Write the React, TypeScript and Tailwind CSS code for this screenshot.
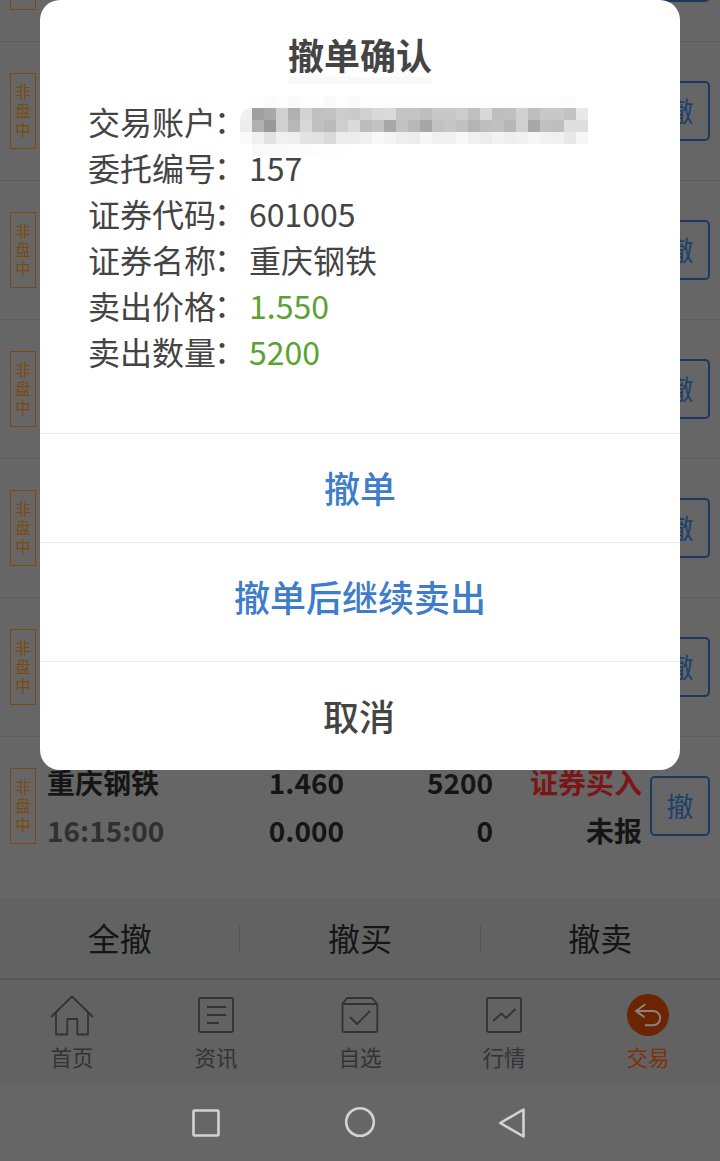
import { useState } from "react";

type Order = {
  tag?: string;
  name?: string;
  time?: string;
  price?: string;
  dealPrice?: string;
  amount?: string;
  dealAmount?: string;
  side?: string;
  status?: string;
};

const orders: Order[] = [
  {},
  { tag: "非盘中" },
  { tag: "非盘中" },
  { tag: "非盘中" },
  { tag: "非盘中" },
  { tag: "非盘中" },
  {
    tag: "非盘中",
    name: "重庆钢铁",
    time: "16:15:00",
    price: "1.460",
    dealPrice: "0.000",
    amount: "5200",
    dealAmount: "0",
    side: "证券买入",
    status: "未报",
  },
];

const details = [
  { label: "交易账户", value: "", color: "" },
  { label: "委托编号", value: "157", color: "text-[#444444]" },
  { label: "证券代码", value: "601005", color: "text-[#444444]" },
  { label: "证券名称", value: "重庆钢铁", color: "text-[#444444]" },
  { label: "卖出价格", value: "1.550", color: "text-[#5ba133]" },
  { label: "卖出数量", value: "5200", color: "text-[#5ba133]" },
];

// grey levels of the masked account number, one 12px block each
const mask = [
  [255, 254, 251, 253, 250, 253, 253, 249, 253, 250, 253, 253, 253, 253, 253, 253, 253, 253, 253, 253, 253, 253, 253, 253, 253, 253, 253, 252, 255],
  [240, 160, 168, 208, 176, 210, 192, 194, 204, 202, 208, 216, 218, 196, 196, 190, 200, 200, 204, 192, 216, 190, 192, 208, 190, 200, 200, 194, 232],
  [236, 176, 152, 208, 184, 216, 192, 186, 206, 218, 188, 194, 168, 194, 184, 166, 194, 198, 192, 180, 190, 192, 182, 208, 168, 192, 190, 222, 222],
  [250, 240, 226, 240, 238, 228, 226, 218, 236, 236, 240, 248, 244, 238, 236, 246, 240, 240, 248, 240, 236, 243, 238, 241, 247, 242, 240, 232, 247],
  [255, 249, 250, 250, 251, 252, 253, 254, 254, 255, 255, 255, 255, 255, 255, 255, 255, 255, 255, 255, 255, 255, 255, 255, 255, 255, 255, 255, 255],
];

const tabs = ["首页", "资讯", "自选", "行情", "交易"];

function OrderRow({ order }: { order: Order }) {
  return (
    <div className="flex h-[139px] shrink-0 items-center border-b border-[#5d5d5d] px-[10px] last:border-transparent">
      <div className="flex h-[76px] w-[26px] shrink-0 flex-col items-center justify-center border border-[#7c4a0e] pb-px text-[15.5px] leading-[19px] text-[#7c4a0e]">
        {order.tag?.split("").map((c) => (
          <span key={c}>{c}</span>
        ))}
      </div>
      <div className="ml-[11px] grid w-[595px] grid-cols-[150px_147px_149px_149px] text-right text-[28px] leading-[48px] font-bold text-[#151515]">
        <span className="text-left">{order.name}</span>
        <span>{order.price}</span>
        <span>{order.amount}</span>
        <span className="text-[#7b1618]">{order.side}</span>
        <span className="text-left text-[#303030]">{order.time}</span>
        <span>{order.dealPrice}</span>
        <span>{order.dealAmount}</span>
        <span>{order.status}</span>
      </div>
      <button className="ml-2 h-[60px] w-[60px] shrink-0 rounded-[5px] border-2 border-[#1c385c] pb-[2px] text-[27px] leading-none text-[#1e406c]">
        {order.tag && "撤"}
      </button>
    </div>
  );
}

function TabIcon({ index }: { index: number }) {
  if (index === 4) {
    return (
      <svg width="44" height="44" viewBox="0 0 44 44" fill="none">
        <circle cx="22" cy="22" r="21" fill="#6b2404" />
        <path d="M19.3 11.3L10 17.9L18.5 24.3M10 17.9H27A7.2 7.2 0 0 1 27 32.3H19" stroke="#8f827b" strokeWidth="2" />
      </svg>
    );
  }
  return (
    <svg width="44" height="44" viewBox="0 0 44 44" fill="none" stroke="#333" strokeWidth="1.8" strokeLinejoin="round">
      {index === 0 && (
        <path d="M1 24L22 3.5L43 24M6 19.5V41.5H17.3V26H27.3V41.5H38V19.5" />
      )}
      {index === 1 && (
        <>
          <rect x="5" y="5" width="34" height="34" rx="1.5" />
          <path d="M13 14H32M13 22H32M13 30H25" />
        </>
      )}
      {index === 2 && (
        <>
          <path d="M4.5 11L9 5H34L39.3 11V37.5Q39.3 39 38 39H6Q4.5 39 4.5 37.5ZM4.5 11H39.3" />
          <path d="M12 24L19 31L32 18" />
        </>
      )}
      {index === 3 && (
        <>
          <rect x="5" y="5" width="34" height="34" rx="1.5" />
          <path d="M11 28L19.5 20.5L24 25L33.5 16" />
        </>
      )}
    </svg>
  );
}

export default function App() {
  const [open, setOpen] = useState<boolean>(true);

  return (
    <div className="relative flex h-[1161px] w-[720px] flex-col overflow-hidden bg-[#666666] font-['Noto_Sans_CJK_SC',sans-serif]">
      {/* order list, scrolled so the first row is cut off */}
      <div className="flex h-[898px] shrink-0 flex-col justify-end overflow-hidden pb-[22px]">
        {orders.map((order, i) => (
          <OrderRow key={i} order={order} />
        ))}
      </div>

      <div className="flex h-[82px] shrink-0 items-center border-b-2 border-[#575757] bg-[#626262] text-[32px] text-[#151515]">
        <span className="flex-1 pb-[3px] text-center">全撤</span>
        <span className="h-7 w-px bg-[#565656]" />
        <span className="flex-1 pb-[3px] text-center">撤买</span>
        <span className="h-7 w-px bg-[#565656]" />
        <span className="flex-1 pb-[3px] text-center">撤卖</span>
      </div>

      <div className="flex h-[103px] shrink-0 bg-[#626262] pt-[13px]">
        {tabs.map((tab, i) => (
          <div key={tab} className="flex flex-1 flex-col items-center">
            <TabIcon index={i} />
            <span className={`mt-[4px] text-[21.5px] leading-8 ${i === 4 ? "text-[#7e300a]" : "text-[#333333]"}`}>
              {tab}
            </span>
          </div>
        ))}
      </div>

      {/* system navigation */}
      <div className="flex h-[78px] shrink-0 items-center justify-center bg-[#666666]">
        <svg width="360" height="40" viewBox="0 0 360 40" fill="none" stroke="#d3d3d3" strokeWidth="2.6" strokeLinejoin="round">
          <rect x="13.5" y="8.5" width="25" height="25" rx="1" />
          <circle cx="180" cy="20" r="13.8" />
          <path d="M320.3 21L343.5 7.5V34.5Z" />
        </svg>
      </div>

      {open && (
        <div className="absolute top-0 left-10 h-[770px] w-[640px] overflow-hidden rounded-[20px] bg-white text-[#444444]">
          <div className="flex h-[434px] flex-col items-center border-b border-[#ebebeb]">
            <h1 className="mt-[30px] h-[47px] text-center text-[36px] leading-[48px] font-bold">撤单确认</h1>
            <div className="h-[7px] w-36 bg-[#f9f9f9]" />
            <div className="mt-[14px] w-full pl-12 text-[32px] leading-[46px]">
              {details.map((item) => (
                <div key={item.label} className="flex h-[46px]">
                  <span className="shrink-0">{item.label}</span>
                  <span className="-mt-[2px] -ml-[2px] w-[35px] shrink-0">：</span>
                  {item.value ? (
                    <span className={item.color}>{item.value}</span>
                  ) : (
                    <div className="-mt-[2px] -ml-[9px] grid h-[60px] grid-cols-[repeat(29,12px)] grid-rows-[repeat(5,12px)]">
                      {mask.flat().map((g, i) => (
                        <span
                          key={i}
                          className={i === 29 ? "rounded-tl-full" : ""}
                          style={{ backgroundColor: `rgb(${g},${g},${g})` }}
                        />
                      ))}
                    </div>
                  )}
                </div>
              ))}
            </div>
          </div>
          <button onClick={() => setOpen(false)} className="block h-[109px] w-full border-b border-[#ebebeb] pb-[3px] text-[36px] font-medium text-[#3d7dca]">
            撤单
          </button>
          <button onClick={() => setOpen(false)} className="block h-[119px] w-full border-b border-[#ebebeb] pb-3 text-[36px] font-medium text-[#3d7dca]">
            撤单后继续卖出
          </button>
          <button onClick={() => setOpen(false)} className="block h-[108px] w-full pr-[2px] pb-[3px] text-[36px] font-medium">
            取消
          </button>
        </div>
      )}
    </div>
  );
}
